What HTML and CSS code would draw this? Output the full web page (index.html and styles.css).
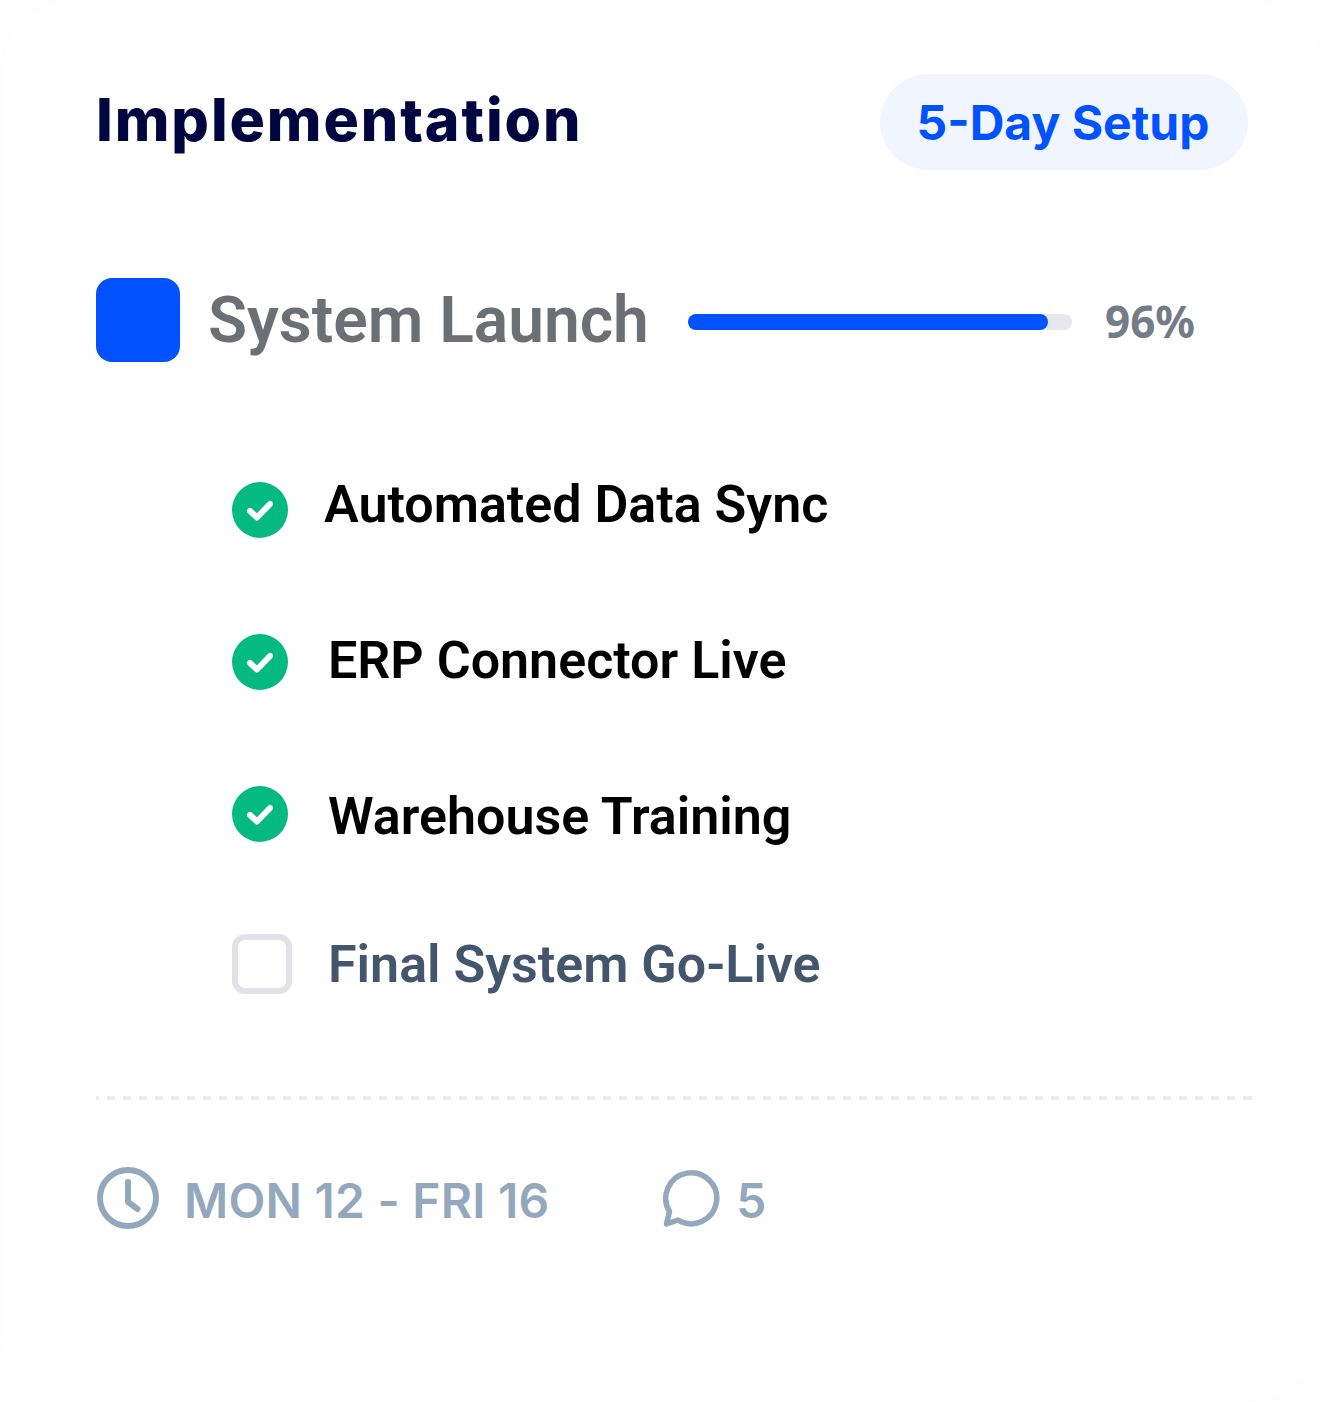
FILE: index.html
```html
<!DOCTYPE html>
<html lang="en">
<head>
    <meta charset="UTF-8">
    <title>Implementation</title>
    <link rel="stylesheet" href="styles.css">
</head>
<body>
    <div class="card">
        <header class="card-head">
            <h1>Implementation</h1>
            <span class="badge">5-Day Setup</span>
        </header>

        <div class="phase">
            <div class="phase-mark"></div>
            <h2>System Launch</h2>
            <div class="bar"><div class="bar-fill" style="width: 360px"></div></div>
            <span class="percent">96%</span>
        </div>

        <ul class="tasks">
            <li class="task task-a">
                <svg class="check" viewBox="0 0 56 56"><circle cx="28" cy="28" r="28" fill="#05ba81"/><path d="M18 29l7 6.500L38 22" fill="none" stroke="#fff" stroke-width="6" stroke-linecap="round" stroke-linejoin="round"/></svg>
                <span class="task-name">Automated Data Sync</span>
            </li>
            <li class="task task-b">
                <svg class="check" viewBox="0 0 56 56"><circle cx="28" cy="28" r="28" fill="#05ba81"/><path d="M18 29l7 6.500L38 22" fill="none" stroke="#fff" stroke-width="6" stroke-linecap="round" stroke-linejoin="round"/></svg>
                <span class="task-name">ERP Connector Live</span>
            </li>
            <li class="task task-c">
                <svg class="check" viewBox="0 0 56 56"><circle cx="28" cy="28" r="28" fill="#05ba81"/><path d="M18 29l7 6.500L38 22" fill="none" stroke="#fff" stroke-width="6" stroke-linecap="round" stroke-linejoin="round"/></svg>
                <span class="task-name">Warehouse Training</span>
            </li>
            <li class="task task-d">
                <span class="box"></span>
                <span class="task-name pending">Final System Go-Live</span>
            </li>
        </ul>

        <div class="divider"></div>

        <footer class="card-foot">
            <svg class="clock" viewBox="0 0 64 64" fill="none" stroke="#94a8bd" stroke-width="6"><circle cx="32" cy="32" r="28"/><path d="M32 16v20l9.500 7" stroke-linecap="round" stroke-linejoin="round"/></svg>
            <span class="dates">MON 12 - FRI 16</span>
            <svg class="bubble" viewBox="0 0 60 60" fill="none" stroke="#94a8bd" stroke-width="5.500" stroke-linejoin="round"><path d="M17 52A25.500 25.500 0 1 0 8.500 43.500L5.500 56z"/></svg>
            <span class="count">5</span>
        </footer>
    </div>
</body>
</html>
```

FILE: styles.css
```css
* {
    box-sizing: border-box;
}
html, body {
    margin: 0;
    padding: 0;
    background-color: #fefefe;
}
.card {
    width: 1324px;
    height: 1402px;
    background: white;
    border-radius: 76px;
    box-shadow: inset 0 0 0 1px #fdfdfe;
    padding: 74px 76px 0 96px;
}
.card-head {
    display: flex;
    justify-content: space-between;
    align-items: center;
}
h1 {
    margin: -4px 0 0 0;
    font: 800 59px/96px Inter, sans-serif;
    letter-spacing: 1.9px;
    color: #000640;
}
.badge {
    background-color: #f0f5ff;
    color: #0052ff;
    border-radius: 48px;
    height: 96px;
    width: 368px;
    padding-right: 2px;
    text-align: center;
    font: 700 48px/98px Inter, sans-serif;
}
.phase {
    display: flex;
    align-items: center;
    margin-top: 108px;
    height: 84px;
}
.phase-mark {
    width: 84px;
    height: 84px;
    background-color: #0052ff;
    border-radius: 16px;
}
h2 {
    margin: 2px 0 0 28px;
    font: 600 64px/84px Roboto, sans-serif;
    color: #6c7075;
    width: 480px;
    white-space: nowrap;
}
.bar {
    width: 384px;
    height: 16px;
    background-color: #e5e8ee;
    border-radius: 8px;
    margin-top: 4px;
}
.bar-fill {
    height: 16px;
    background-color: #0052ff;
    border-radius: 8px;
}
.percent {
    margin: 2px 0 0 33px;
    font: 700 44px/84px "Noto Sans", sans-serif;
    color: #737c87;
}
.tasks {
    list-style-type: none;
    margin: 0;
    padding: 0 0 0 136px;
}
.task {
    display: flex;
    align-items: center;
    height: 60px;
}
.task-a { margin-top: 112px; }
.task-b { margin-top: 96px; }
.task-c { margin-top: 96px; }
.task-d { margin-top: 88px; }
.check {
    width: 56px;
    height: 56px;
    flex: none;
}
.task-a .check { margin-top: 12px; }
.task-b .check { margin-top: 4px; }
.task-c .check { margin-top: -4px; }
.box {
    width: 60px;
    height: 60px;
    border: 6px solid #e0e2e7;
    border-radius: 13px;
}
.task-name {
    margin: 2px 0 0 40px;
    font: 600 52px/60px Roboto, sans-serif;
    color: black;
    white-space: nowrap;
}
.task-a .task-name { margin-left: 36px; }
.task-d .task-name { margin-left: 36px; }
.pending {
    color: #43566e;
}
.divider {
    width: 1156px;
    height: 4px;
    margin-top: 102px;
    background-image: repeating-linear-gradient(to right, #e9ebf1 0 8px, transparent 8px 16px);
    background-position: -5px 0;
}
.card-foot {
    display: flex;
    align-items: center;
    margin-top: 63px;
}
.clock {
    width: 64px;
    height: 64px;
}
.dates {
    margin: 6px 0 0 24px;
    font: 600 48px/64px Inter, sans-serif;
    letter-spacing: 0.2px;
    color: #94a8bd;
}
.bubble {
    width: 60px;
    height: 60px;
    margin-left: 112px;
}
.count {
    margin: 6px 0 0 15px;
    font: 600 48px/64px Inter, sans-serif;
    color: #94a8bd;
}
```
